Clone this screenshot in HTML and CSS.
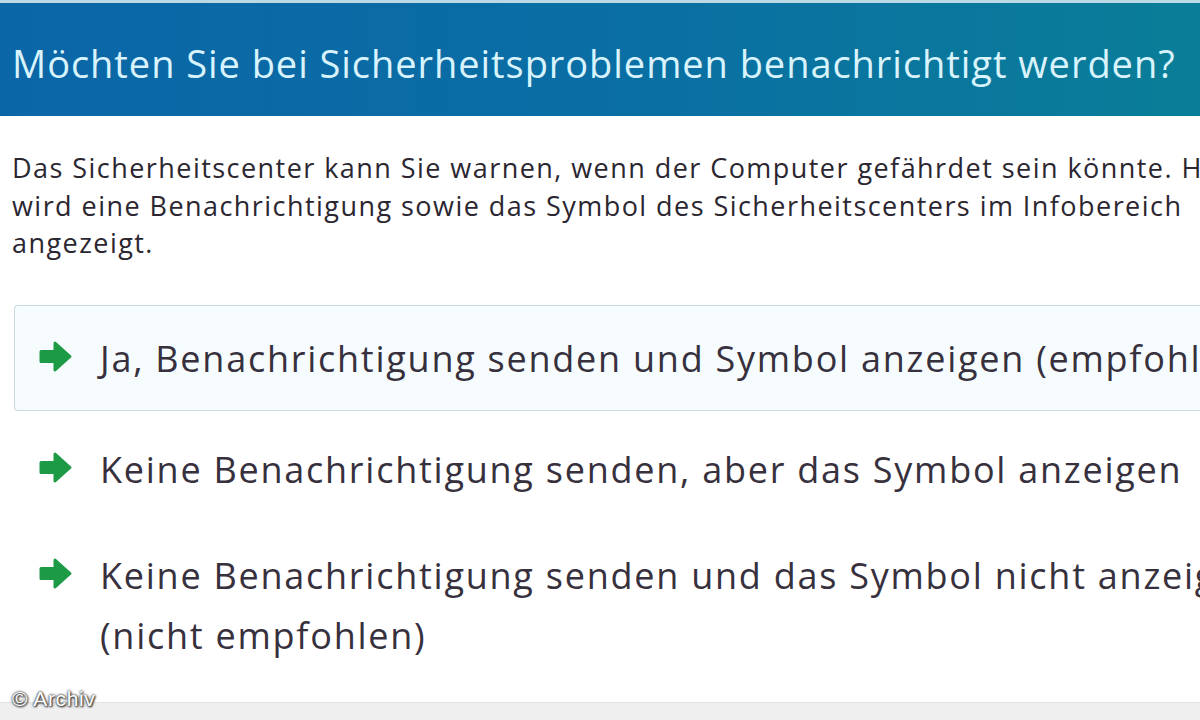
FILE: index.html
```html
<!DOCTYPE html>
<html lang="de">
<head>
    <meta charset="UTF-8">
    <title>Sicherheitscenter – Benachrichtigungen</title>
    <link rel="stylesheet" href="styles.css">
</head>
<body>
    <div class="page">
        <div class="header">
            <h1>Möchten Sie bei Sicherheitsproblemen benachrichtigt werden?</h1>
        </div>
        <p class="intro">Das Sicherheitscenter kann Sie warnen, wenn der Computer gefährdet sein könnte. Hierbei<br>wird eine Benachrichtigung sowie das Symbol des Sicherheitscenters im Infobereich<br>angezeigt.</p>
        <div class="options">
            <div class="option selected">
                <svg class="arrow" viewBox="0 0 35 33"><path d="M3 11.5h14V3l15 13.5-15 13.5v-8.5H3z"/></svg>
                <span>Ja, Benachrichtigung senden und Symbol anzeigen (empfohlen)</span>
            </div>
            <div class="option">
                <svg class="arrow" viewBox="0 0 35 33"><path d="M3 11.5h14V3l15 13.5-15 13.5v-8.5H3z"/></svg>
                <span>Keine Benachrichtigung senden, aber das Symbol anzeigen</span>
            </div>
            <div class="option">
                <svg class="arrow" viewBox="0 0 35 33"><path d="M3 11.5h14V3l15 13.5-15 13.5v-8.5H3z"/></svg>
                <span>Keine Benachrichtigung senden und das Symbol nicht anzeigen<br>(nicht empfohlen)</span>
            </div>
        </div>
        <div class="footer">
            <span class="credit">© Archiv</span>
        </div>
    </div>
</body>
</html>
```

FILE: styles.css
```css
body {
    margin: 0;
    background: #ffffff;
    font-family: 'Open Sans', 'Noto Sans', sans-serif;
    color: #37303d;
    overflow: hidden;
}
.page {
    width: 1200px;
    height: 720px;
    overflow: hidden;
    display: flex;
    flex-direction: column;
}
.header {
    height: 113px;
    border-top: 3px solid #bcd9e6;
    background: linear-gradient(90deg, #0b66a7, #0a6ea4 50%, #0a7e98);
    padding-left: 12px;
    box-sizing: content-box;
}
h1 {
    margin: 0;
    padding-top: 34px;
    font-weight: 400;
    font-size: 38px;
    line-height: 52px;
    color: #d8f3fc;
    white-space: nowrap;
    letter-spacing: 0.95px;
}
.intro {
    margin: 33px 0 0 12px;
    font-size: 27px;
    line-height: 37.5px;
    white-space: nowrap;
    letter-spacing: 1.45px;
    color: #2b2630;
}
.options {
    margin: 43px 0 0 14px;
    display: flex;
    flex-direction: column;
}
.option {
    display: flex;
    align-items: flex-start;
    font-size: 36px;
    line-height: 60px;
    letter-spacing: 1.75px;
    white-space: nowrap;
    padding: 28px 0 16px 23px;
    border: 1px solid transparent;
    border-right: none;
}
.option.selected {
    padding: 23px 0 21px 23px;
    border-color: #c9dcde;
    border-radius: 4px 0 0 4px;
    background: #f6fcfd;
}
.arrow {
    width: 35px;
    height: 33px;
    margin: 11px 27px 0 0;
    flex: none;
    fill: #1d9a45;
    stroke: #1d9a45;
    stroke-width: 3;
    stroke-linejoin: round;
}
.footer {
    margin-top: auto;
    height: 17px;
    background: #efefef;
    border-top: 1px solid #e2e2e2;
    position: relative;
}
.credit {
    position: absolute;
    left: 12px;
    bottom: 9px;
    font-family: 'Liberation Sans', Arial, sans-serif;
    font-size: 21px;
    color: #ffffff;
    letter-spacing: 0.6px;
    text-shadow: 0 0 2px #333, 0 0 3px #555, 1px 1px 2px #222;
}
```
